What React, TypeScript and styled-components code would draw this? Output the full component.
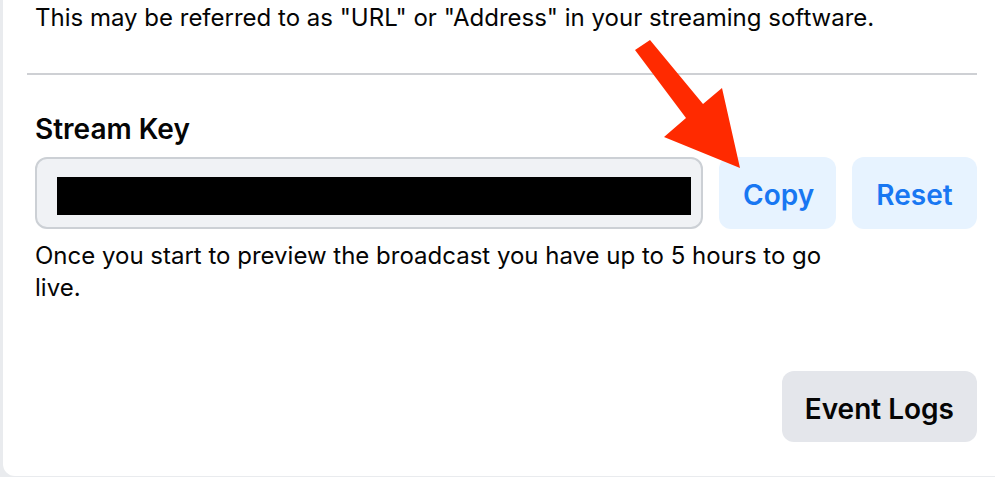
import React from "react";
import styled, { createGlobalStyle } from "styled-components";

const GlobalStyle = createGlobalStyle`
  html, body {
    margin: 0;
    padding: 0;
    background: #e9ebee;
    font-family: Inter, "Noto Sans", "Liberation Sans", sans-serif;
    color: #050505;
  }
`;

const Page = styled.div`
  width: 995px;
  height: 477px;
  overflow: hidden;
  padding-left: 3px;
  box-sizing: border-box;
`;

const Card = styled.section`
  position: relative;
  background: #fff;
  height: 476px;
  border-bottom-left-radius: 12px;
  padding: 0 18px 0 32px;
  box-sizing: border-box;
  display: flex;
  flex-direction: column;
`;

const Hint = styled.p`
  margin: 0;
  padding-top: 3px;
  font-size: 24px;
  line-height: 30px;
`;

const Divider = styled.hr`
  border: none;
  height: 2px;
  background: #ced0d4;
  margin: 40px 0 0 -8px;
`;

const Label = styled.h3`
  margin: 37px 0 0;
  font-size: 28px;
  line-height: 34px;
  font-weight: 600;
`;

const Row = styled.div`
  display: grid;
  grid-template-columns: 1fr 117px 125px;
  gap: 16px;
  margin-top: 11px;
  height: 72px;
`;

const KeyField = styled.div`
  box-sizing: border-box;
  background: #f0f2f5;
  border: 2px solid #ccd0d5;
  border-radius: 12px;
  padding: 18px 10px 12px 20px;
`;

const Redacted = styled.div`
  background: #000;
  height: 38px;
`;

const Button = styled.button<{ $variant?: "primary" | "secondary" }>`
  border: none;
  border-radius: 12px;
  font-family: inherit;
  font-size: 28px;
  font-weight: 600;
  padding: 4px 24px 0;
  cursor: pointer;
  background: ${(p) => (p.$variant === "primary" ? "#e7f3ff" : "#e4e6eb")};
  color: ${(p) => (p.$variant === "primary" ? "#1877f2" : "#050505")};
`;

const Help = styled.p`
  margin: 11px 0 0;
  font-size: 24px;
  line-height: 32px;
  max-width: 810px;
`;

const Footer = styled.div`
  margin-top: auto;
  margin-bottom: 34px;
  display: flex;
  justify-content: flex-end;
`;

const LogsButton = styled(Button)`
  height: 71px;
  padding: 4px 23px 0;
`;

const Arrow = styled.svg`
  position: absolute;
  left: 0;
  top: 0;
  pointer-events: none;
`;

export default function App() {
  return (
    <>
      <GlobalStyle />
      <Page>
        <Card>
          <Hint>This may be referred to as "URL" or "Address" in your streaming software.</Hint>
          <Divider />
          <Label>Stream Key</Label>
          <Row>
            <KeyField>
              <Redacted />
            </KeyField>
            <Button $variant="primary">Copy</Button>
            <Button $variant="primary">Reset</Button>
          </Row>
          <Help>Once you start to preview the broadcast you have up to 5 hours to go live.</Help>
          <Footer>
            <LogsButton>Event Logs</LogsButton>
          </Footer>
          <Arrow width="995" height="477" viewBox="0 0 995 477">
            <polygon
              fill="#ff2a00"
              points="632,50 647,40 700,104 719,88 737,168 661,137 683,118"
            />
          </Arrow>
        </Card>
      </Page>
    </>
  );
}
